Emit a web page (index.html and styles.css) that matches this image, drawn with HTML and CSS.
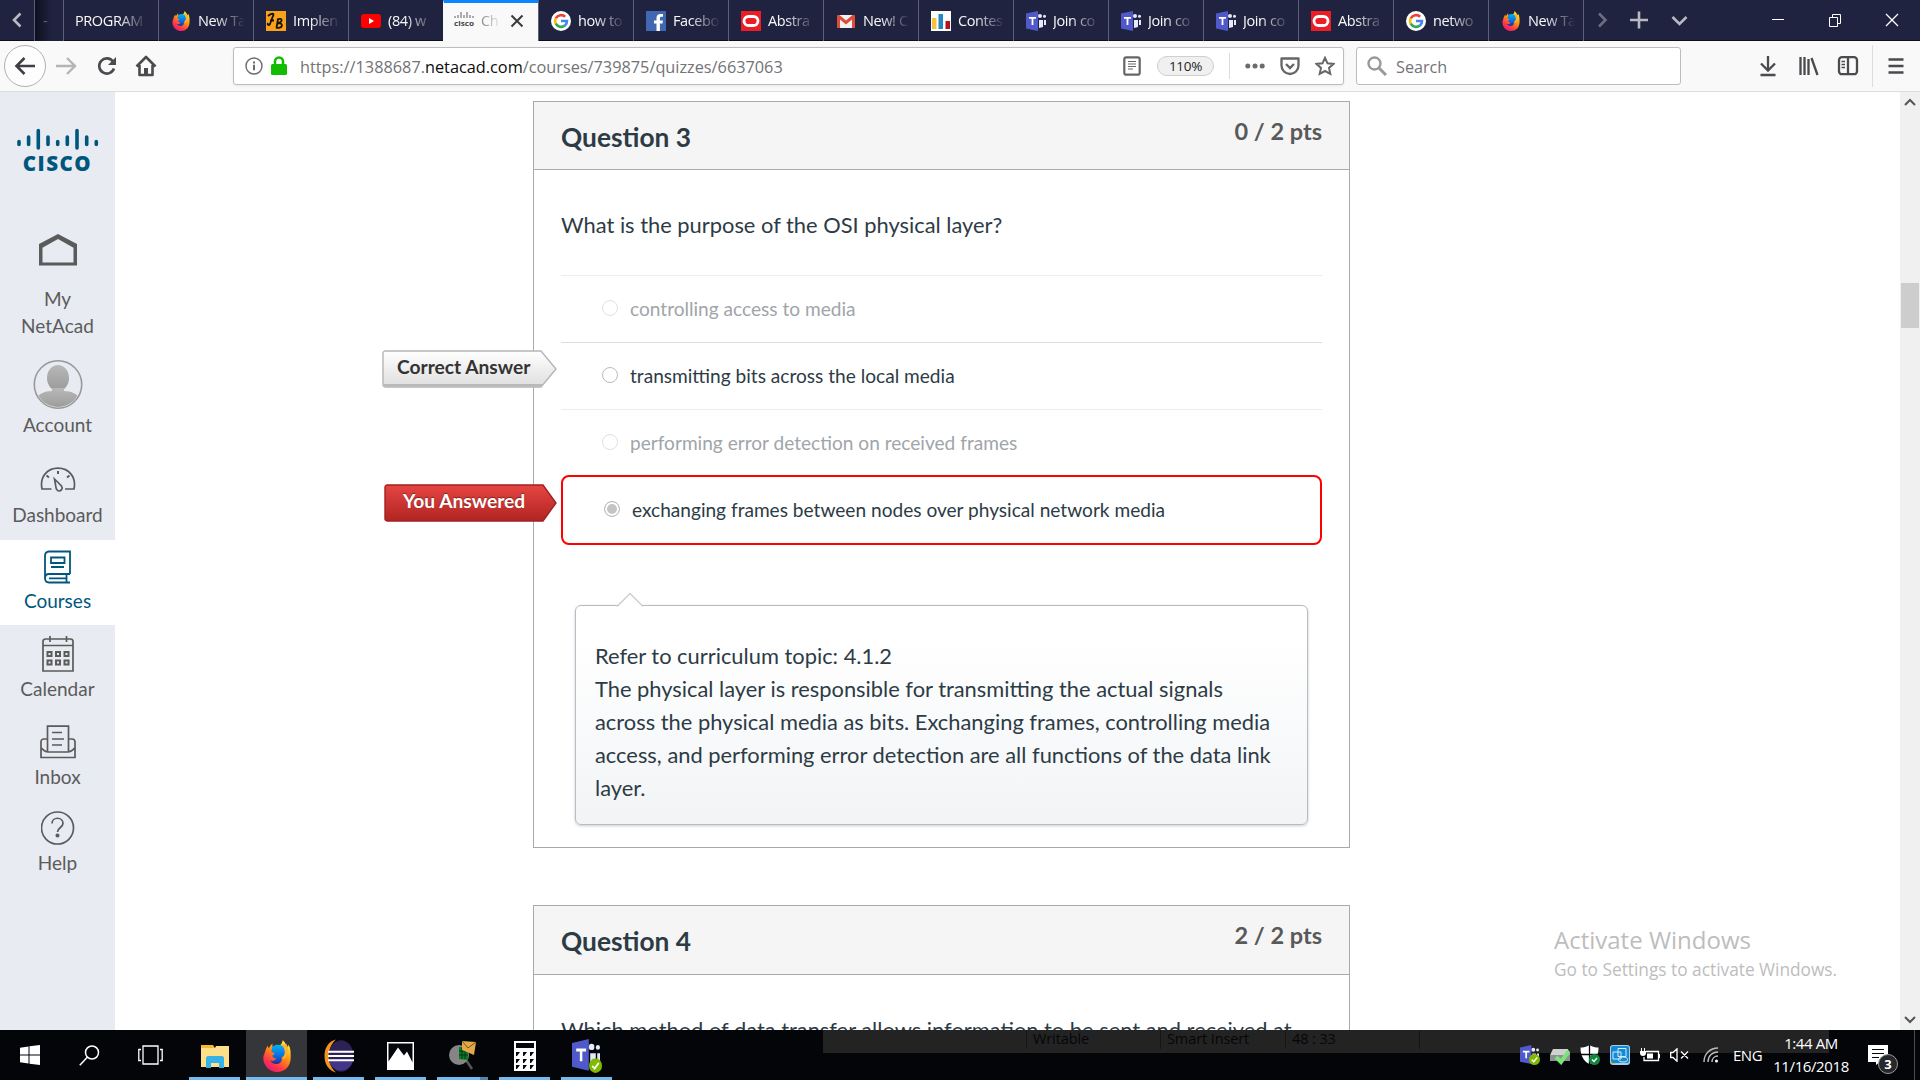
FILE: index.html
```html
<!DOCTYPE html>
<html lang="en">
<head>
<meta charset="utf-8">
<title>Chapter quiz</title>
<link rel="stylesheet" href="styles.css">
</head>
<body>
<svg class="defs" width="0" height="0">
  <defs>
    <linearGradient id="fxg" x1="0.8" y1="0" x2="0.2" y2="1"><stop offset="0" stop-color="#fff44f"/><stop offset=".4" stop-color="#ff980e"/><stop offset=".75" stop-color="#ff3647"/><stop offset="1" stop-color="#e31587"/></linearGradient>
    <linearGradient id="fxb" x1="0" y1="0" x2="0" y2="1"><stop offset="0" stop-color="#00b3f4"/><stop offset=".6" stop-color="#0a6ae0"/><stop offset="1" stop-color="#2b2a8c"/></linearGradient>
    <linearGradient id="grey" x1="0" y1="0" x2="0" y2="1"><stop offset="0" stop-color="#ffffff"/><stop offset="1" stop-color="#dedede"/></linearGradient>
    <linearGradient id="red" x1="0" y1="0" x2="0" y2="1"><stop offset="0" stop-color="#e54542"/><stop offset="1" stop-color="#b12522"/></linearGradient>
    <linearGradient id="ava" x1="0" y1="0" x2="0" y2="1"><stop offset="0" stop-color="#b8b8b8"/><stop offset="1" stop-color="#9a9a9a"/></linearGradient>
  </defs>
  <symbol id="firefox" viewBox="0 0 24 28">
    <path fill="url(#fxg)" d="M1 12C2 8 3 6 4 5c0 1 .5 2 1 2 1-2 2-3 3-4v3c3 1 6 0 8-3 1-2 1-2 1-3 2 2 3 4 4 6 1 0 1-1 1-2 2 3 2 7 2 11 0 8-5 13-12 13S0 22 0 16c0-2 .500-3 1-4z"/>
    <path fill="url(#fxb)" d="M8 6c4-3 9-2 11 2 1 4-1 6-3 7 1 4-2 6-5 6-2 0-4-1-5-3 3 1 5-.500 5-2-2 0-3-1-3-2s1-1 2-2c0-1-2-1-3-2z"/>
    <path fill="#ffb52a" d="M16 4c3 3 4 9 1 13 5-2 6-9 3-14-1 1-3 1-4 1z"/>
  </symbol>
  <symbol id="google" viewBox="0 0 20 20">
    <circle cx="10" cy="10" r="10" fill="#fff"/>
    <g fill="none" stroke-width="2.600"><path stroke="#ea4335" d="M4.800 7.300A6 6 0 0 1 14.200 5.800"/><path stroke="#fbbc05" d="M4.800 7.200a6 6 0 0 0 0 5.600"/><path stroke="#34a853" d="M4.800 12.700a6 6 0 0 0 9 1.900"/><path stroke="#4285f4" d="M10 10h6a6 6 0 0 1-2.200 4.700"/></g>
  </symbol>
  <symbol id="oracle" viewBox="0 0 20 20"><path fill="#ee1c25" d="M0 0h20v20H0z"/><rect x="3" y="5.500" width="14" height="9" rx="4.500" fill="none" stroke="#fff" stroke-width="2.800"/></symbol>
  <symbol id="teams" viewBox="0 0 20 20">
    <path fill="#5059c9" d="M0 2.500L12 0v20L0 17.500z"/><path fill="#fff" d="M3 6h7v1.800H7.400V14H5.600V7.800H3z"/>
    <g fill="#e6e8fb"><circle cx="14" cy="5" r="2"/><circle cx="18.500" cy="5.300" r="1.500"/><path d="M13 9h4v7l-4 1zM18 9h2v5h-2z"/></g>
  </symbol>
  <symbol id="ok" viewBox="0 0 10 10"><circle cx="5" cy="5" r="5" fill="#7fba00"/><path d="M2.500 5.200l1.800 1.800 3.200-3.800" fill="none" stroke="#fff" stroke-width="1.300"/></symbol>
</svg>

<div class="screen">
  <header class="tabs">
    <button class="tab-scroll"><svg width="10" height="16" viewBox="0 0 10 16"><path d="M8.500 1.500L2 8l6.500 6.500" fill="none" stroke="#b9b9c3" stroke-width="2.600"/></svg></button>
    <div class="tab partial">-</div>
    <div class="tab"><span class="tab-text wide">PROGRAM</span></div>
    <div class="tab"><svg class="fav"><use href="#firefox"/></svg><span class="tab-text">New Ta</span></div>
    <div class="tab"><svg class="fav" viewBox="0 0 20 20"><path fill="#f9a11b" d="M0 0h20v20H0z"/><path d="M2 5c3-3 7-3 5 0L4 13c-1 2-3 1-2-1M4 9.500h4M12 8l-1.500 9M11 8.500c6-2.500 6 3 1 3.500 6 0 5 6-2 4.500" fill="none" stroke="#15120c" stroke-width="1.800"/></svg><span class="tab-text">Implen</span></div>
    <div class="tab"><svg class="fav" viewBox="0 0 20 20"><rect y="3" width="20" height="14" rx="3" fill="#f00"/><path fill="#fff" d="M8 7l5 3-5 3z"/></svg><span class="tab-text">(84) w</span></div>
    <div class="tab active"><svg class="fav" viewBox="0 0 20 20"><path d="M1 5v2M4 4v3M7 1v6M10 4v3M13 1v6M16 4v3M19 5v2" stroke="#777" stroke-width="1.200"/><text x="0" y="15" textLength="20" lengthAdjust="spacingAndGlyphs" class="mini">cisco</text></svg><span class="tab-text short">Ch</span><svg class="close" width="14" height="14" viewBox="0 0 14 14"><path d="M1.500 1.500l11 11m0-11l-11 11" stroke="#3a3a3e" stroke-width="2"/></svg></div>
    <div class="tab"><svg class="fav"><use href="#google"/></svg><span class="tab-text">how to</span></div>
    <div class="tab"><svg class="fav" viewBox="0 0 20 20"><path fill="#4167b2" d="M0 0h20v20H0z"/><path fill="#fff" d="M10.500 20v-7.500H8V9.500h2.500V7c0-2.600 1.500-4 4-4H17v2.800h-1.600c-1.200 0-1.500.6-1.500 1.500v2.200h3l-.4 3h-2.600V20z"/></svg><span class="tab-text">Facebo</span></div>
    <div class="tab"><svg class="fav"><use href="#oracle"/></svg><span class="tab-text">Abstra</span></div>
    <div class="tab"><svg class="fav" viewBox="0 0 20 20"><path fill="#f2f2f2" d="M2 4h16v13H2z"/><path fill="#dd4b39" d="M2 4h1.500L10 9.500 16.500 4H18a1 1 0 0 1 1 1v12h-3V8.500l-6 5-6-5V17H1V5a1 1 0 0 1 1-1z"/></svg><span class="tab-text">New! C</span></div>
    <div class="tab"><svg class="fav" viewBox="0 0 20 20"><path fill="#fff" d="M0 0h20v20H0z"/><path fill="#f5c33c" d="M1 7h4.500v11H1z"/><path fill="#2187c7" d="M7.500 3H12v15H7.500z"/><path fill="#b5121b" d="M14.500 10H19v8h-4.500z"/></svg><span class="tab-text">Contes</span></div>
    <div class="tab"><svg class="fav"><use href="#teams"/></svg><span class="tab-text">Join co</span></div>
    <div class="tab"><svg class="fav"><use href="#teams"/></svg><span class="tab-text">Join co</span></div>
    <div class="tab"><svg class="fav"><use href="#teams"/></svg><span class="tab-text">Join co</span></div>
    <div class="tab"><svg class="fav"><use href="#oracle"/></svg><span class="tab-text">Abstra</span></div>
    <div class="tab"><svg class="fav"><use href="#google"/></svg><span class="tab-text">netwo</span></div>
    <div class="tab last"><svg class="fav"><use href="#firefox"/></svg><span class="tab-text">New Ta</span></div>
    <div class="tab-tools">
      <svg width="322" height="40" viewBox="0 0 322 40" fill="none">
        <path d="M15 13.500l6.500 6.500-6.500 6.500" stroke="#6c6d81" stroke-width="2.600"/>
        <path d="M46 20h18M55 11.500v17" stroke="#b9b9c3" stroke-width="2.600"/>
        <path d="M88.500 17l7 7 7-7" stroke="#b9b9c3" stroke-width="2.600"/>
        <path d="M188 19.500h12" stroke="#fff"/>
        <path d="M245.500 17.500h8v9h-8zM248.500 17.500v-3h8v9h-3" stroke="#fff"/>
        <path d="M302 14l12 12m0-12l-12 12" stroke="#fff" stroke-width="1.300"/>
      </svg>
    </div>
  </header>

  <nav class="toolbar">
    <div class="back"><svg width="22" height="20" viewBox="0 0 22 20"><path d="M21 10H3M10.500 2L2.500 10l8 8" fill="none" stroke="#3f3f44" stroke-width="2.600"/></svg></div>
    <svg class="fwd" width="21" height="18" viewBox="0 0 21 18"><path d="M0 9h18M11 1l8 8-8 8" fill="none" stroke="#b5b5b7" stroke-width="2.400"/></svg>
    <svg class="reload" width="20" height="20" viewBox="0 0 20 20"><path d="M16 5.500A7.600 7.600 0 1 0 17 12.500" fill="none" stroke="#4a4a4f" stroke-width="2.600"/><path fill="#4a4a4f" d="M19 1v8h-8z"/></svg>
    <svg class="home" width="22" height="22" viewBox="0 0 22 22"><path d="M1.500 11.500L11 2l9.500 9.500M4.500 10v10h13V10" fill="none" stroke="#4a4a4f" stroke-width="2.600" stroke-linejoin="round"/><path fill="#4a4a4f" d="M9 13h4v7H9z"/></svg>
    <div class="urlbar">
      <svg class="info" width="18" height="18" viewBox="0 0 18 18"><circle cx="9" cy="9" r="8" fill="none" stroke="#6b6b6e" stroke-width="1.400"/><path d="M9 7.800v5.500M9 4.500v2" stroke="#6b6b6e" stroke-width="2"/></svg>
      <svg class="lock" width="16" height="19" viewBox="0 0 16 19"><path d="M4 9V5.500a4 4 0 0 1 8 0V9" fill="none" stroke="#12bc00" stroke-width="2.600"/><rect y="8" width="16" height="11" rx="1.500" fill="#12bc00"/></svg>
      <span class="url">https://1388687.<b>netacad.com</b>/courses/739875/quizzes/6637063</span>
      <svg class="reader" width="18" height="20" viewBox="0 0 18 20"><rect x="1.300" y="1.300" width="15.400" height="17.400" rx="2" fill="none" stroke="#666" stroke-width="2.200"/><path d="M5 5.500h8M5 8h8M5 10.500h8M5 13h5" stroke="#666" stroke-width="1.200"/></svg>
      <span class="zoom">110%</span>
      <span class="sep"></span>
      <svg class="dots" width="20" height="6" viewBox="0 0 20 6" fill="#6b6b6e"><circle cx="2.800" cy="3" r="2.500"/><circle cx="10" cy="3" r="2.500"/><circle cx="17.200" cy="3" r="2.500"/></svg>
      <svg class="pocket" width="20" height="19" viewBox="0 0 20 19" fill="none" stroke="#666"><path d="M1.500 1.500h17v7a8.500 8.500 0 0 1-17 0z" stroke-width="2.300" stroke-linejoin="round"/><path d="M6 7l4 4 4-4" stroke-width="2.400"/></svg>
      <svg class="star" width="20" height="20" viewBox="0 0 20 20"><path d="M10 1.800l2.500 5.500 6 .6-4.500 4 1.300 6L10 15l-5.300 2.900 1.300-6-4.500-4 6-.6z" fill="none" stroke="#666" stroke-width="2"/></svg>
    </div>
    <div class="search"><svg width="20" height="20" viewBox="0 0 20 20"><circle cx="7.500" cy="7.500" r="6" fill="none" stroke="#999" stroke-width="2.400"/><path d="M12 12l7 7" stroke="#999" stroke-width="3"/></svg><span>Search</span></div>
    <svg class="tools" width="150" height="42" viewBox="0 0 150 42" fill="none" stroke="#4a4a4f" stroke-width="2.300">
      <path d="M13 11v14M6 18.500l7 7 7-7M5.500 30h15"/>
      <path d="M45.500 12v18M49.500 12v18M53.500 14v16M56.500 13l6 17"/>
      <rect x="84" y="12.200" width="18" height="17" rx="3"/><path d="M93 12v17"/><path d="M86.500 16.500H90M86.500 19.500H90M86.500 22.500H90" stroke-width="1.300"/>
      <path d="M117.500 0v42" stroke="#dedede" stroke-width="1"/>
      <path d="M133.500 14.500h15M133.500 21h15M133.500 27.500h15"/>
    </svg>
  </nav>

  <div class="page">
    <aside class="side">
      <div class="logo">
        <svg width="84" height="24" viewBox="0 0 84 24" stroke="#00577d" stroke-width="3.600" stroke-linecap="round"><path d="M3 13.500v3M12.600 9v7.500M22.300 2.500V20M32 9v7.500M41.700 13.500v3M51.300 9v7.500M61 2.500V20M70.700 9v7.500M80.300 13.500v3"/></svg>
        <span>CISCO</span>
      </div>
      <a class="item my"><svg width="38" height="32" viewBox="0 0 38 32"><path fill="#5b5b5b" fill-rule="evenodd" d="M19 0l19 10v21.500H0V10zM19 5L3.500 13.800V28.500h31V13.800z"/></svg><span>My<br>NetAcad</span></a>
      <a class="item account"><svg width="50" height="49" viewBox="0 0 50 49"><clipPath id="cav"><circle cx="25" cy="24.500" r="22.500"/></clipPath><circle cx="25" cy="24.500" r="23.700" fill="#e8ebf2" stroke="#999" stroke-width="1.600"/><g clip-path="url(#cav)" fill="url(#ava)"><ellipse cx="25" cy="18" rx="11" ry="13"/><path d="M19 28h12v3c8 0 13 3 17 8v10H2V39c4-5 9-8 17-8z"/></g></svg><span>Account</span></a>
      <a class="item dash"><svg width="36" height="25" viewBox="0 0 36 25" fill="none" stroke="#5b5b5b" stroke-width="1.700"><path d="M11.500 22H2C-.500 10 7 1.200 18 1.200S36.500 10 34 22h-9"/><path d="M14.500 12l7 7c2 3-1 5-2.500 5s-3-2-3-3.500z"/><path d="M18 4v3M6.500 8.500L9 10.500M29.500 8.500L27 10.500" stroke-width="2"/></svg><span>Dashboard</span></a>
      <a class="item courses"><svg width="27" height="34" viewBox="0 0 27 34" fill="none" stroke="#00577d" stroke-width="1.800"><path d="M26 24V1.500H5C2 1.500 1 3.500 1 6v22c0-3 1-4 4-4h21M1 28c0 3 1 4.500 4 4.500h21M22.500 24v8M5 28.300h17"/><path d="M7 7.500h13.500V13H7zM7 17h13"/></svg><span>Courses</span></a>
      <a class="item cal"><svg width="32" height="36" viewBox="0 0 32 36" fill="none" stroke="#5b5b5b" stroke-width="1.700"><path d="M1 35V5.500C1 4 2 3 3.500 3h25C30 3 31 4 31 5.500V35zM1 9.500h30M8 0v6M24.500 0v6"/><path d="M5.500 16h4v4h-4zM14 16h4v4h-4zM22.500 16h4v4h-4zM5.500 24.500h4v4h-4zM14 24.500h4v4h-4zM22.500 24.500h4v4h-4z" stroke-width="2"/></svg><span>Calendar</span></a>
      <a class="item inbox"><svg width="36" height="34" viewBox="0 0 36 34" fill="none" stroke="#5b5b5b" stroke-width="1.700"><path d="M7.500 27V1.200h21V27M7.500 14H4c-2 0-3 1-3 3v15.500h34V17c0-2-1-3-3-3h-3.500M1 23c3 2 3 4 7 4h20c4 0 4-2 7-4"/><path d="M12 7.500h10M12 14h12M12 20h10"/></svg><span>Inbox</span></a>
      <a class="item help"><svg width="34" height="34" viewBox="0 0 34 34" fill="none" stroke="#5b5b5b" stroke-width="1.700"><circle cx="16.500" cy="17" r="16"/><path d="M11 12.500c0-7 11-7 11 0 0 4-5.500 4-5.500 8.500"/><circle cx="16.500" cy="24.500" r="1.200" fill="#5b5b5b"/></svg><span>Help</span></a>
    </aside>

    <main class="content">
      <section class="card">
        <div class="card-head"><h2>Question 3</h2><span class="pts">0 / 2 pts</span></div>
        <p class="ask">What is the purpose of the OSI physical layer?</p>
        <div class="answers">
          <div class="answer faded"><i class="radio"></i><span>controlling access to media</span></div>
          <div class="answer"><i class="radio"></i><span>transmitting bits across the local media</span>
            <div class="tag right"><svg width="175" height="38" viewBox="0 0 175 38"><path d="M3 1h156l15 18-15 18H3c-1 0-2-1-2-2V3c0-1 1-2 2-2z" fill="url(#grey)" stroke="#b5b5b5" stroke-width="1.400"/><path d="M2 35.300h158" stroke="#b9b9b9" stroke-width="2.400"/></svg><span>Correct Answer</span></div>
          </div>
          <div class="answer faded"><i class="radio"></i><span>performing error detection on received frames</span></div>
          <div class="answer picked"><i class="radio"></i><span>exchanging frames between nodes over physical network media</span>
            <div class="tag wrong"><svg width="173" height="38" viewBox="0 0 173 38"><path d="M3 1h156l13 18-13 18H3c-1 0-2-1-2-2V3c0-1 1-2 2-2z" fill="url(#red)" stroke="#a32020" stroke-width="1.400"/></svg><span>You Answered</span></div>
          </div>
        </div>
        <div class="feedback">
          <svg class="beak" width="28" height="15" viewBox="0 0 28 15"><path d="M1 14.500L14 1.500l13 13" fill="#fff" stroke="#c9ced4" stroke-width="1.300"/></svg>
          <p>Refer to curriculum topic: 4.1.2<br>The physical layer is responsible for transmitting the actual signals<br>across the physical media as bits. Exchanging frames, controlling media<br>access, and performing error detection are all functions of the data link<br>layer.</p>
        </div>
      </section>
      <section class="card">
        <div class="card-head"><h2>Question 4</h2><span class="pts">2 / 2 pts</span></div>
        <p class="ask">Which method of data transfer allows information to be sent and received at</p>
      </section>
      <div class="watermark"><div class="w1">Activate Windows</div><div class="w2">Go to Settings to activate Windows.</div></div>
    </main>

    <div class="scroll">
      <svg width="20" height="20" viewBox="0 0 20 20"><path d="M5 13l5-5 5 5" fill="none" stroke="#555" stroke-width="2"/></svg>
      <div class="thumb"></div>
      <svg class="down" width="20" height="20" viewBox="0 0 20 20"><path d="M5 7l5 5 5-5" fill="none" stroke="#555" stroke-width="2"/></svg>
    </div>
  </div>

  <footer class="taskbar">
    <div class="ghost"><span class="g1">Writable</span><span class="g2">Smart Insert</span><span class="g3">48 : 33</span></div>
    <div class="sys">
      <svg width="20" height="20" viewBox="0 0 20 20"><path fill="#fff" d="M0 2.700L8.500 1.500v8H0zM9.500 1.300L20 0v9.500H9.500zM0 10.500h8.500v8L0 17.300zM9.500 10.500H20V20L9.500 18.700z"/></svg>
      <svg width="21" height="21" viewBox="0 0 21 21" fill="none" stroke="#fff" stroke-width="1.500"><circle cx="13" cy="7.500" r="6.500"/><path d="M8.500 12L.800 20.300"/></svg>
      <svg width="25" height="20" viewBox="0 0 25 20" fill="none" stroke="#fff" stroke-width="1.300"><path d="M5 1h15v18H5zM3 4.500H.800v11H3M22 4.500h2.200v11H22"/></svg>
    </div>
    <div class="apps">
      <div class="app"><svg width="28" height="24" viewBox="0 0 28 24"><path fill="#f5b92e" d="M0 1h12l2 3H0z"/><path fill="#ffe08a" d="M0 4h14l1-2h13v21H0z"/><path fill="#35b2e8" d="M5 14c0-1 1-2 2-2h14c1 0 2 1 2 2v10h-5v-5h-8v5H5z"/></svg></div>
      <div class="app on"><svg width="28" height="32"><use href="#firefox"/></svg></div>
      <div class="app"><svg width="30" height="34" viewBox="0 0 30 28" preserveAspectRatio="none"><path d="M12 .500C4 2 .500 8 .500 14S4 26 12 27.500C7 24 5 19 5 14S7 4 12 .500z" fill="#f7941e"/><ellipse cx="17" cy="14" rx="12.500" ry="13" fill="#2c2255"/><path fill="#43368a" d="M5 18h24c-1 4-6 8-12 8S6 22 5 18z"/><path d="M4 10.500h26M4 14h26M4 17.500h26" stroke="#fff" stroke-width="1.800"/></svg></div>
      <div class="app"><svg width="27" height="28" viewBox="0 0 27 28"><path fill="#fff" d="M0 0h27v28H0z"/><path fill="#05070c" d="M1.500 1.500h24v19L20 9.500l-3 4-6-8-9.500 14z"/></svg></div>
      <div class="app multi"><svg width="28" height="30" viewBox="0 0 28 30"><path d="M17 19l6 9" stroke="#555" stroke-width="2.500"/><circle cx="10" cy="14" r="10" fill="#858585"/><path d="M10 6l9 1v12l-9-1z" fill="#0b7a1d"/><path d="M10 10h9M10 14h9M13 6v12M16 6v12" stroke="#032" stroke-width="1"/><path d="M13 0l14 1-2 13-12-5z" fill="#e2a94b"/><path d="M13 0l6 7 8-6" fill="none" stroke="#7d5313"/></svg></div>
      <div class="app"><svg width="22" height="30" viewBox="0 0 22 30"><path fill="#fff" d="M0 0h22v30H0z"/><path fill="#05070c" d="M2 2h18v5H2zM2 11h4l-3 4H2zM9 11h4l-3 4H9zM16 11h4l-3 4h-1zM2 18h4l-3 4H2zM9 18h4l-3 4H9zM16 18h4l-3 4h-1zM2 24h4l-3 4H2zM9 24h4l-3 4H9zM16 24h4l-3 4h-1z"/></svg></div>
      <div class="app"><svg width="30" height="34" viewBox="0 0 30 30" preserveAspectRatio="none"><use href="#teams" width="28" height="28"/><use href="#ok" x="17" y="17" width="13" height="13"/></svg></div>
    </div>
    <div class="tray">
      <svg width="20" height="20" viewBox="0 0 20 20"><use href="#teams" width="19" height="19"/><use href="#ok" x="9" y="9" width="11" height="11"/></svg>
      <svg width="20" height="20" viewBox="0 0 20 20"><path fill="#d0d0d0" d="M3 4h15l2 6v6H0v-6z"/><path fill="#8f8f8f" d="M0 10h20v6H0z"/><path d="M6 12l5 5 8-11" fill="none" stroke="#7be37c" stroke-width="4"/></svg>
      <svg width="20" height="20" viewBox="0 0 20 20"><path fill="#fff" d="M9.500 0c3 2 6 2.500 9 2.500 0 8-3 14-9 16.500C3.500 16.500.500 10.500.500 2.500c3 0 6-.500 9-2.500z"/><path d="M9.500 0v19M1 9.500h17" stroke="#05070c" stroke-width="1.300"/><circle cx="14.500" cy="14.500" r="5.500" fill="#10893e"/><path d="M12 14.500l2 2 3-3.500" fill="none" stroke="#fff" stroke-width="1.400"/></svg>
      <svg width="20" height="20" viewBox="0 0 20 20"><rect width="20" height="20" rx="3" fill="#a7cdea"/><path fill="#f0ad32" d="M1 14l5 5H3c-1 0-2-1-2-2z"/><rect x="1" y="1" width="18" height="17" rx="2" fill="#138bd3"/><g fill="none" stroke="#d5edfb"><path d="M3 7h8v7H3zM8 3.500h8v8H8z"/><ellipse cx="13" cy="14.500" rx="4.500" ry="2.500"/></g></svg>
      <svg width="20" height="14" viewBox="0 0 20 14"><path d="M6 3.500h12.500v9H4V9" fill="none" stroke="#fff" stroke-width="1.300"/><path fill="#fff" d="M7 5.500h6v5H7zM19 6h1v4h-1zM0 3h6v2c0 2-1 3-3 3S0 7 0 5zM1 0h1v3H1zM4 0h1v3H4z"/></svg>
      <svg width="19" height="14" viewBox="0 0 19 14" fill="none" stroke="#fff" stroke-width="1.300"><path d="M.700 4.500H3L7 .800v12.400L3 9.500H.700zM11 3.500l7 7m0-7l-7 7"/></svg>
      <svg class="wifi" width="16" height="16" viewBox="0 0 16 16" fill="none" stroke="#bbb" stroke-width="1.400"><path d="M1 15C1 7 7 1 15 1M5 15C5 9 9 5 15 5M9 15c0-3 2-6 6-6"/><circle cx="13.500" cy="14" r="1.500" fill="#fff" stroke="none"/></svg>
      <span class="lang">ENG</span>
      <div class="clock"><span>1:44 AM</span><span>11/16/2018</span></div>
      <div class="note"><svg width="20" height="20" viewBox="0 0 20 20"><path fill="#fff" d="M0 0h20v17h-8l-4 3v-3H0z"/><path d="M4 4.500h12M4 8.500h12M4 12.500h7" stroke="#05070c" stroke-width="1.200"/></svg><span class="count">3</span></div>
      <span class="peek"></span>
    </div>
  </footer>
</div>
</body>
</html>
```
FILE: styles.css
```css
* { box-sizing: border-box; }
body { margin: 0; font-family: "Open Sans", "Noto Sans", sans-serif; }
.defs { display: block; position: absolute; }
svg { display: block; flex: none; }
.screen { width: 1920px; height: 1080px; display: flex; flex-direction: column; overflow: hidden; background: #fff; }

.tabs { height: 41px; flex: none; display: flex; background: #20233f; border-bottom: 1px solid #0c0c1a; color: #f9f9fa; font-size: 14.5px; }
.tab-scroll { width: 34px; border: 0; background: none; padding: 0 0 0 12px; display: flex; align-items: center; }
.tab { width: 95px; height: 41px; flex: none; display: flex; align-items: center; gap: 7px; padding-left: 12px; border-left: 1px solid #5d5f76; }
.tab.partial { width: 29px; padding-left: 8px; color: #5d6079; background: linear-gradient(90deg, #0e0f1e, #20233f 60%); }
.tab.last { border-right: 1px solid #5d5f76; width: 96px; }
.tab.active { background: #f9f9fa; border-left-color: #f9f9fa; border-top: 3px solid #0a84ff; color: #3a3a3e; padding: 0 0 3px 10px; }
.fav { width: 20px; height: 20px; }
.tab-text { width: 48px; white-space: nowrap; letter-spacing: -.4px; -webkit-mask-image: linear-gradient(90deg, #000 35%, transparent 98%); mask-image: linear-gradient(90deg, #000 35%, transparent 98%); }
.tab-text.wide { width: 72px; margin-left: -1px; -webkit-mask-image: linear-gradient(90deg, #000 60%, transparent); mask-image: linear-gradient(90deg, #000 60%, transparent); }
.tab-text.short { width: 22px; -webkit-mask-image: linear-gradient(90deg, #0009, transparent); mask-image: linear-gradient(90deg, #0009, transparent); }
.mini { font: bold 7px "Open Sans", sans-serif; fill: #444; }

.toolbar { height: 51px; flex: none; display: flex; align-items: center; background: #f9f9fa; border-bottom: 1px solid #dcdcdc; }
.back { width: 42px; height: 42px; margin-left: 4px; border: 1px solid #b1b1b3; border-radius: 50%; background: #fdfdfd; display: flex; align-items: center; justify-content: center; }
.fwd { margin-left: 10px; }
.reload { margin-left: 20px; }
.home { margin-left: 18px; }
.urlbar { width: 1111px; height: 38px; margin-left: 76px; display: flex; align-items: center; border: 1px solid #bdbdbe; border-radius: 3px; background: #fff; box-shadow: 0 1px 3px #0001; }
.info { margin-left: 11px; }
.lock { margin: 0 0 1px 8px; }
.url { width: 823px; margin-left: 13px; padding-top: 2px; font-size: 16.300px; color: #737376; white-space: nowrap; }
.url b { font-weight: 400; color: #0c0c0d; }
.zoom { width: 57px; height: 20px; margin-left: 16px; border: 1px solid #cfcfcf; border-radius: 10px; background: #f0f0f0; color: #222; font-size: 13.5px; line-height: 19px; text-align: center; letter-spacing: -.3px; }
.sep { width: 1px; height: 26px; margin-left: 15px; background: #dadada; }
.dots { margin-left: 15px; }
.pocket { margin-left: 15px; }
.star { margin-left: 15px; }
.search { width: 325px; height: 38px; margin-left: 12px; padding-left: 10px; display: flex; align-items: center; gap: 9px; border: 1px solid #bdbdbe; border-radius: 3px; background: #fff; font-size: 16.2px; color: #737376; }
.search span { padding-top: 2px; }
.tools { margin-left: 74px; }

.page { flex: 1; min-height: 0; display: flex; overflow: hidden; }
.side { width: 115px; flex: none; background: #e8ebf2; font: 19px/27px Lato, sans-serif; color: #5b5b5b; }
.logo { height: 128px; padding-top: 36px; display: flex; flex-direction: column; align-items: center; color: #00577d; }
.logo span { font: 900 20.5px/20px "Open Sans", sans-serif; margin-top: 1px; letter-spacing: 1.500px; }
.item { display: flex; flex-direction: column; align-items: center; text-align: center; }
.my { height: 132px; padding-top: 14px; }
.my svg { margin-bottom: 19px; }
.account { height: 95px; padding-top: 8px; }
.account svg { margin-bottom: 2px; }
.dash { height: 93px; padding-top: 20px; }
.dash svg { margin-bottom: 9px; }
.courses { height: 85px; padding-top: 10px; background: #fff; color: #00577d; }
.courses svg { margin-bottom: 3px; }
.cal { height: 88px; padding-top: 11px; }
.cal svg { margin-bottom: 3px; }
.inbox { height: 88px; padding-top: 12px; }
.inbox svg { margin-bottom: 4px; }
.help { padding-top: 10px; }
.help svg { margin-bottom: 4px; }

.content { flex: 1; padding: 9px 0 0 418px; display: flex; flex-direction: column; gap: 57px; font-family: Lato, sans-serif; color: #2d3b45; position: relative; overflow: hidden; }
.card { width: 817px; height: 747px; flex: none; border: 1px solid #aaa; padding-bottom: 22px; }
.card-head { height: 68px; display: flex; justify-content: space-between; padding: 0 27px; background: #f5f5f5; border-bottom: 1px solid #aaa; }
.card + .card .card-head { height: 69px; }
.card-head h2 { margin: 0; font-size: 26.300px; line-height: 70px; }
.pts { font-size: 23.500px; font-weight: 700; line-height: 58px; color: #595959; }
.ask { margin: 0; padding: 38px 27px 0; font-size: 21.870px; line-height: 33px; white-space: nowrap; }
.answers { margin: 34px 27px 0; font-size: 19.100px; }
.answer { height: 67px; display: flex; align-items: center; gap: 12px; padding: 0 0 2px 41px; border-top: 1px solid #ddd; position: relative; white-space: nowrap; }
.answer.faded { border-top-color: #ececec; }
.answer.faded > span { color: #a0a5aa; }
.answer.picked { height: 70px; border: 2px solid #f00; border-radius: 8px; margin-top: -1px; }
.radio { width: 16px; height: 16px; border: 1px solid #bbb; border-radius: 50%; background: #fff; }
.faded .radio { border-color: #e0e0e0; }
.picked .radio { background: #c4c4c4; box-shadow: inset 0 0 0 2px #fff; }
.tag { position: absolute; height: 38px; font-size: 19.200px; font-weight: 700; }
.tag span { position: absolute; left: 0; top: 0; line-height: 34px; }
.tag.right { left: -179px; top: 7px; color: #333; }
.tag.right span { left: 15px; }
.tag.wrong { left: -179px; top: 7px; color: #fff; }
.tag.wrong span { left: 19px; text-shadow: 0 -1px 1px #0006; }
.feedback { position: relative; width: 733px; height: 220px; margin: 60px 0 0 41px; padding: 34px 19px; border: 1px solid #b4bcc5; border-radius: 6px; background: linear-gradient(#fff, #fff 15%, #f2f4f6); box-shadow: 0 1px 3px #0003; font-size: 21.860px; line-height: 32.900px; white-space: nowrap; }
.feedback p { margin: 0; }
.beak { position: absolute; left: 40px; top: -14px; }
.watermark { position: absolute; left: 1439px; top: 829px; color: #bdbdbd; font-family: "Open Sans", sans-serif; white-space: nowrap; }
.w1 { font-size: 24px; line-height: 38px; }
.w2 { font-size: 17.300px; line-height: 22px; }

.scroll { width: 20px; flex: none; display: flex; flex-direction: column; background: #f0f0f0; }
.thumb { width: 18px; height: 45px; margin: 171px auto 0; background: #cdcdcd; }
.down { margin-top: auto; }

.taskbar { height: 50px; flex: none; display: flex; background: #030509; color: #fff; position: relative; }
.ghost { position: absolute; left: 823px; top: 0; width: 1006px; height: 23px; background: #232324; color: #060606; font-size: 14.500px; line-height: 17px; letter-spacing: -.1px; display: flex; padding-left: 203px; }
.ghost span { border-left: 1px solid #151515; padding-left: 6px; height: 19px; white-space: nowrap; }
.g1 { width: 134px; }
.g2 { width: 125px; }
.g3 { width: 135px; border-right: 1px solid #151515; }
.sys { display: flex; align-items: center; padding: 0 0 0 20px; width: 189px; gap: 38.500px; }
.apps { display: flex; }
.app { width: 51px; margin-right: 11px; display: flex; align-items: center; justify-content: center; padding-top: 4px; border-bottom: 3px solid #76b9ed; }
.app:first-child { margin-right: 6px; }
.app.on { width: 61px; background: #35363a; margin-right: 6px; }
.app.multi { border-image: linear-gradient(90deg, #76b9ed 80%, #5285ad 80%) 3; border-style: solid; border-width: 0 0 3px; }
.tray { position: relative; display: flex; align-items: center; gap: 10px; margin-left: auto; height: 50px; width: 400px; }
.wifi { margin-left: 4px; }
.lang { font-size: 15px; width: 32px; margin-left: 4px; letter-spacing: -.5px; }
.clock { width: 76px; margin-left: -2px; display: flex; flex-direction: column; align-items: center; font-size: 15px; line-height: 23px; letter-spacing: -.4px; }
.note { position: relative; margin-left: 9px; }
.count { position: absolute; left: 10px; top: 9px; width: 20px; height: 20px; border: 1px solid #999; border-radius: 50%; background: #26282c; font-size: 13px; font-weight: 700; line-height: 18px; text-align: center; }
.peek { width: 1px; height: 50px; margin-left: 16px; background: #4a4c50; }
```
